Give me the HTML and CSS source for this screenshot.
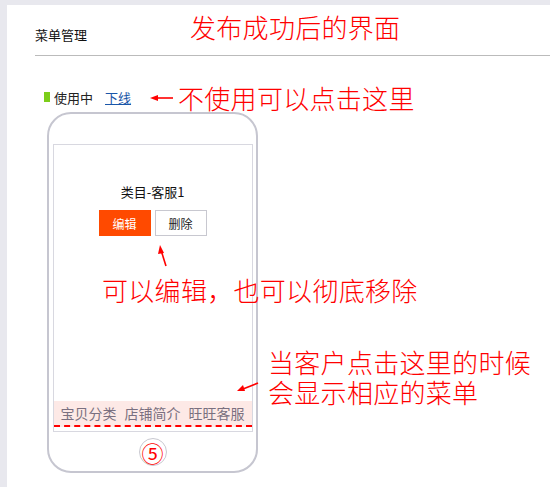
FILE: index.html
```html
<!DOCTYPE html>
<html lang="zh-CN">
<head>
  <meta charset="UTF-8" />
  <title>菜单管理</title>
  <link rel="stylesheet" href="styles.css">
</head>
<body>
  <div class="page">
    <div class="header">
      <h3>菜单管理</h3>
      <span class="note note-title">发布成功后的界面</span>
    </div>

    <div class="content">
      <div class="status">
        <span class="dot"></span>
        <span>使用中</span>
        <a href="#">下线</a>
      </div>

      <div class="phone">
        <div class="screen">
          <div class="menu-name">类目-客服1</div>
          <div class="actions">
            <button class="btn btn-edit">编辑</button>
            <button class="btn btn-del">删除</button>
          </div>
          <div class="nav">
            <span>宝贝分类</span>
            <span>店铺简介</span>
            <span>旺旺客服</span>
          </div>
        </div>
        <div class="home">⑤</div>
      </div>

      <!-- annotations drawn over the page -->
      <svg class="arrows" width="550" height="420" viewBox="0 0 550 420">
        <g stroke="#f00" stroke-width="1.6" fill="#f00">
          <line x1="166" y1="42" x2="148" y2="42" />
          <polygon points="143,42 151,39 151,45" stroke="none" />
          <line x1="159" y1="210" x2="154" y2="194" />
          <polygon points="153,189 151,198 157,197" stroke="none" />
          <line x1="251" y1="327" x2="236" y2="333" />
          <polygon points="230,335 236,329 238,335" stroke="none" />
        </g>
      </svg>
      <span class="note note-off">不使用可以点击这里</span>
      <span class="note note-edit">可以编辑，也可以彻底移除</span>
      <span class="note note-nav">当客户点击这里的时候<br>会显示相应的菜单</span>
    </div>
  </div>
</body>
</html>
```

FILE: styles.css
```css
html, body { margin: 0; height: 100%; }
body { background: #e8e8ee; font-family: "Noto Sans CJK SC", "Liberation Sans", sans-serif; font-size: 13px; color: #222; }
.page { margin: 5px 0 0 7px; background: #fff; min-height: 482px; }

.header { display: flex; align-items: center; height: 50px; margin-left: 28px; border-bottom: 1px solid #bbb; }
.header h3 { margin: 0; font-size: 13px; font-weight: normal; color: #111; padding-top: 8px; }
.note { color: #f00; font-size: 26px; line-height: 29px; font-weight: 300; letter-spacing: 0.3px; white-space: nowrap; }
.note-title { margin-left: 103px; margin-top: -8px; }

.content { position: relative; padding: 28px 0 0 37px; }
.status { display: flex; align-items: center; height: 26px; gap: 4px; }
.dot { width: 6px; height: 10px; background: #7ccd1a; }
.status a { margin-left: 8px; color: #1a56a8; }

.phone { margin: 2px 0 0 3px; width: 207px; height: 357px; border: 2px solid #c6c6d0; border-radius: 24px; display: flex; flex-direction: column; align-items: center; }
.screen { margin-top: 30px; width: 198px; height: 286px; border: 1px solid #d8d8e0; display: flex; flex-direction: column; align-items: center; }
.menu-name { margin-top: 37px; font-size: 13px; color: #111; }
.actions { display: flex; gap: 4px; margin-top: 9px; }
.btn { width: 52px; height: 26px; font-family: inherit; font-size: 12px; border: 1px solid #c8c8d0; background: #fff; color: #222; padding: 0; }
.btn-edit { background: #ff4a00; border-color: #ff4a00; color: #fff; }
.nav { margin-top: auto; margin-bottom: 4px; width: 198px; height: 24px; background: #fde9e6; border-bottom: 2px dashed #f00; display: flex; justify-content: center; gap: 8px; align-items: center; font-size: 14px; color: #7a7080; }
.home { margin-top: 6px; width: 26px; height: 26px; border: 1px solid #c8c8d0; border-radius: 50%; color: #f00; font-size: 22px; line-height: 26px; text-align: center; }

.arrows { position: absolute; left: 0; top: 0; pointer-events: none; }
.note-off { position: absolute; left: 171px; top: 27px; }
.note-edit { position: absolute; left: 95px; top: 219px; }
.note-nav { position: absolute; left: 261px; top: 291px; line-height: 30px; }
```
